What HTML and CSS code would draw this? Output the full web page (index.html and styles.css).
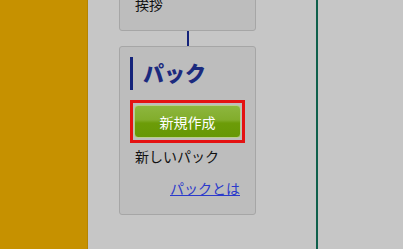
FILE: index.html
```html
<!DOCTYPE html>
<html lang="ja">
<head>
  <meta charset="UTF-8" />
  <title>パック</title>
  <link rel="stylesheet" href="styles.css">
</head>
<body>
  <div class="layout">
    <div class="sidebar"></div>

    <div class="flow">
      <div class="card card-prev">
        <div class="card-text">挨拶</div>
      </div>
      <div class="connector"></div>
      <div class="card">
        <h2 class="card-title">パック</h2>
        <div class="btn-frame">
          <button class="btn-new">新規作成</button>
        </div>
        <div class="card-text">新しいパック</div>
        <div class="card-link"><a href="#">パックとは</a></div>
      </div>
    </div>

    <div class="right-pane"></div>
  </div>
</body>
</html>
```

FILE: styles.css
```css
html, body {
  margin: 0;
  height: 100%;
  overflow: hidden;
}

body {
  background-color: #c6c6c6;
  font-family: "Noto Sans CJK JP", "Noto Sans", sans-serif;
  color: #111;
}

.layout {
  display: flex;
  height: 100%;
}

.sidebar {
  width: 87px;
  flex: none;
  background-color: #c69100;
  border-right: 1px solid #b58500;
}

.flow {
  width: 137px;
  margin-left: 31px;
  margin-top: -40px;
  display: flex;
  flex-direction: column;
  align-items: center;
}

.card {
  box-sizing: border-box;
  width: 137px;
  background-color: #bdbdbd;
  border: 1px solid #a6a6a6;
  border-radius: 3px;
  padding: 10px 15px 16px 10px;
}

.card-prev {
  height: 71px;
  padding-top: 33px;
}

.card-text {
  font-size: 14px;
  line-height: 20px;
  margin-left: 5px;
}

.connector {
  width: 2px;
  height: 15px;
  background-color: #14237a;
}

.card-title {
  margin: 0;
  height: 33px;
  border-left: 3px solid #14237a;
  padding-left: 10px;
  font-size: 21px;
  font-weight: 900;
  line-height: 31px;
  color: #1b2a7e;
}

.btn-frame {
  margin-top: 10px;
  width: 115px;
  box-sizing: border-box;
  border: 3px solid #e41212;
  padding: 2px 1px 2px 1px;
  margin-bottom: 3px;
}

.btn-new {
  display: block;
  width: 100%;
  height: 33px;
  border: 1px solid #b9cf8c;
  border-radius: 4px;
  background: linear-gradient(to bottom, #8db63e 0%, #82ad2c 45%, #6c9c08 55%, #679806 100%);
  color: #fff;
  font-family: inherit;
  font-size: 14px;
  padding: 0;
  cursor: pointer;
}

.card-link {
  text-align: right;
  margin-top: 12px;
  font-size: 14px;
  line-height: 20px;
}

.card-link a {
  color: #2b3acb;
}

.right-pane {
  flex: 1;
  margin-left: 60px;
  border-left: 2px solid #0e5f4b;
}
```
